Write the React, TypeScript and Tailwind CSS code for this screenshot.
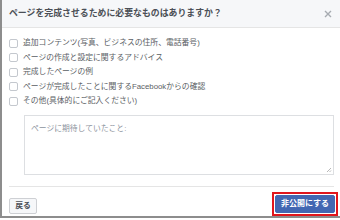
import React from "react";

const items = [
  "追加コンテンツ(写真、ビジネスの住所、電話番号)",
  "ページの作成と設定に関するアドバイス",
  "完成したページの例",
  "ページが完成したことに関するFacebookからの確認",
  "その他(具体的にご記入ください)",
];

export default function App() {
  return (
    <div
      className="w-[340px] h-[220px] bg-white overflow-hidden"
      style={{ fontFamily: '"Liberation Sans", "Noto Sans CJK JP", sans-serif' }}
    >
      <div className="h-[218px] border-l-2 border-b-2 border-[#8d8d8d] bg-white flex flex-col">
        <div className="h-[28px] bg-[#f6f7f9] border-b border-[#e5e5e5] flex items-center justify-between pl-[7px] pr-[7px]">
          <span className="text-[8.9px] font-bold text-[#4b4f56] leading-none">
            ページを完成させるために必要なものはありますか？
          </span>
          <svg width="8" height="8" viewBox="0 0 8 8" className="mr-[1px]">
            <path d="M1 1L7 7M7 1L1 7" stroke="#a7abb1" strokeWidth="1.4" />
          </svg>
        </div>
        <div className="flex flex-col pl-[7px] pr-[6px] pt-[8px]">
          {items.map((t) => (
            <div key={t} className="h-[14.5px] flex items-center">
              <span className="w-[9px] h-[9px] border border-[#c4c8ce] rounded-[2px] bg-white shrink-0" />
              <span className="ml-[5px] text-[7.8px] text-[#5a5e64] leading-none whitespace-nowrap">{t}</span>
            </div>
          ))}
          <div className="ml-[15px] mt-[6px] h-[60px] border border-[#dddfe2] relative">
            <span className="absolute left-[6px] top-[9px] text-[7.8px] text-[#8d949e] leading-none">
              ページに期待していたこと:
            </span>
            <svg width="6" height="6" viewBox="0 0 6 6" className="absolute right-[1px] bottom-[1px]">
              <path d="M5 1L1 5M5 3.5L3.5 5" stroke="#9a9a9a" strokeWidth="0.7" />
            </svg>
          </div>
          <div className="mt-[11px] h-px bg-[#e5e5e5]" />
          <div className="mt-[5px] flex items-center justify-between">
            <button className="mt-[4px] h-[16px] w-[28px] border border-[#ced0d4] bg-[#f6f7f9] rounded-[2px] text-[7.8px] font-bold text-[#4b4f56] leading-none flex items-center justify-center">
              戻る
            </button>
            <div className="border-2 border-[#e0161d] p-px mr-[-4px]">
              <button className="h-[18px] w-[60px] bg-[#4267b2] border border-[#4267b2] rounded-[2px] text-[8px] font-bold text-white leading-none flex items-center justify-center">
                非公開にする
              </button>
            </div>
          </div>
        </div>
      </div>
    </div>
  );
}
